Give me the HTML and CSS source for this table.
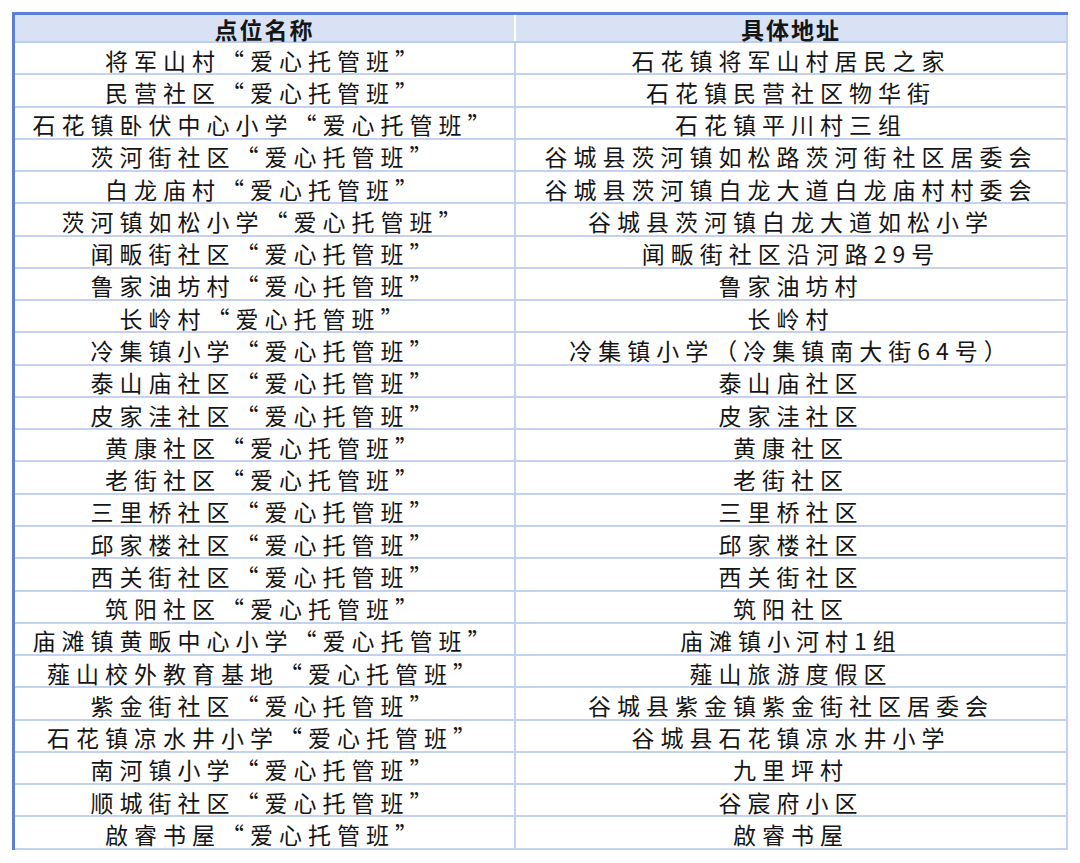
FILE: index.html
```html
<!DOCTYPE html>
<html lang="zh-CN">
<head>
<meta charset="utf-8">
<link rel="stylesheet" href="styles.css">
</head>
<body>
<table class="sheet">
<thead>
<tr><th class="c1">点位名称</th><th class="c2">具体地址</th></tr>
</thead>
<tbody>
<tr><td>将军山村“爱心托管班”</td><td>石花镇将军山村居民之家</td></tr>
<tr><td>民营社区“爱心托管班”</td><td>石花镇民营社区物华街</td></tr>
<tr><td>石花镇卧伏中心小学“爱心托管班”</td><td>石花镇平川村三组</td></tr>
<tr><td>茨河街社区“爱心托管班”</td><td>谷城县茨河镇如松路茨河街社区居委会</td></tr>
<tr><td>白龙庙村“爱心托管班”</td><td>谷城县茨河镇白龙大道白龙庙村村委会</td></tr>
<tr><td>茨河镇如松小学“爱心托管班”</td><td>谷城县茨河镇白龙大道如松小学</td></tr>
<tr><td>闻畈街社区“爱心托管班”</td><td>闻畈街社区沿河路29号</td></tr>
<tr><td>鲁家油坊村“爱心托管班”</td><td>鲁家油坊村</td></tr>
<tr><td>长岭村“爱心托管班”</td><td>长岭村</td></tr>
<tr><td>冷集镇小学“爱心托管班”</td><td>冷集镇小学（冷集镇南大街64号）</td></tr>
<tr><td>泰山庙社区“爱心托管班”</td><td>泰山庙社区</td></tr>
<tr><td>皮家洼社区“爱心托管班”</td><td>皮家洼社区</td></tr>
<tr><td>黄康社区“爱心托管班”</td><td>黄康社区</td></tr>
<tr><td>老街社区“爱心托管班”</td><td>老街社区</td></tr>
<tr><td>三里桥社区“爱心托管班”</td><td>三里桥社区</td></tr>
<tr><td>邱家楼社区“爱心托管班”</td><td>邱家楼社区</td></tr>
<tr><td>西关街社区“爱心托管班”</td><td>西关街社区</td></tr>
<tr><td>筑阳社区“爱心托管班”</td><td>筑阳社区</td></tr>
<tr><td>庙滩镇黄畈中心小学“爱心托管班”</td><td>庙滩镇小河村1组</td></tr>
<tr><td>薤山校外教育基地“爱心托管班”</td><td>薤山旅游度假区</td></tr>
<tr><td>紫金街社区“爱心托管班”</td><td>谷城县紫金镇紫金街社区居委会</td></tr>
<tr><td>石花镇凉水井小学“爱心托管班”</td><td>谷城县石花镇凉水井小学</td></tr>
<tr><td>南河镇小学“爱心托管班”</td><td>九里坪村</td></tr>
<tr><td>顺城街社区“爱心托管班”</td><td>谷宸府小区</td></tr>
<tr><td>啟睿书屋“爱心托管班”</td><td>啟睿书屋</td></tr>
</tbody>
</table>
</body>
</html>
```

FILE: styles.css
```css
html, body {
  margin: 0;
  padding: 0;
  background: #ffffff;
}
body {
  padding: 12px 0 0 12px;
  font-family: "Noto Sans CJK SC", "Noto Sans", sans-serif;
  color: #151515;
}
.sheet {
  border-collapse: collapse;
  width: 1056px;
  height: 838px;
  table-layout: fixed;
  border-top: 3px solid #5a80d8;
  border-left: 3px solid #5a80d8;
  border-right: 2px solid #c6d4f0;
  border-bottom: 2px solid #c6d4f0;
}
.sheet .c1 { width: 499px; }
.sheet th {
  background: #d9e2f5;
  font-weight: 700;
  font-size: 23px;
  letter-spacing: 2px;
  line-height: 24px;
  padding: 2px 0 0 0;
  border-bottom: 2px solid #bccdf0;
  border-right: 2px solid #ffffff;
  text-align: center;
}
.sheet th.c2 { border-right: 2px solid #c6d4f0; }
.sheet td {
  font-size: 23px;
  font-weight: 400;
  letter-spacing: 6px;
  line-height: 24px;
  padding: 3px 0 0 0;
  text-align: center;
  white-space: nowrap;
  border-style: solid;
  border-color: #c3d2f0;
  border-width: 0 2px 2px 0;
}
```
